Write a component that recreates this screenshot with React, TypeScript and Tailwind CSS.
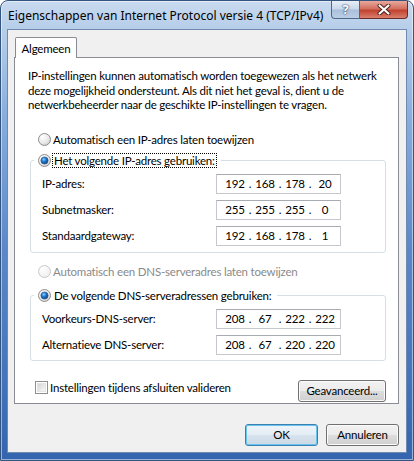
import { Fragment } from "react";

const ipRows = [
  { label: "IP-adres:", value: ["192", "168", "178", "20"] },
  { label: "Subnetmasker:", value: ["255", "255", "255", "0"] },
  { label: "Standaardgateway:", value: ["192", "168", "178", "1"] },
];

const dnsRows = [
  { label: "Voorkeurs-DNS-server:", value: ["208", "67", "222", "222"] },
  { label: "Alternatieve DNS-server:", value: ["208", "67", "220", "220"] },
];

function Radio({ checked = false, disabled = false }: { checked?: boolean; disabled?: boolean }) {
  return (
    <svg width="13" height="13" viewBox="0 0 13 13" className="shrink-0">
      <defs>
        <radialGradient id="radio-face" cx="0.35" cy="0.3" r="0.8">
          <stop offset="0" stopColor="#ffffff" />
          <stop offset="0.6" stopColor="#e9e9e9" />
          <stop offset="1" stopColor="#c9c9c9" />
        </radialGradient>
        <radialGradient id="radio-face-off" cx="0.35" cy="0.3" r="0.8">
          <stop offset="0" stopColor="#ffffff" />
          <stop offset="1" stopColor="#ececec" />
        </radialGradient>
        <radialGradient id="radio-dot" cx="0.4" cy="0.35" r="0.7">
          <stop offset="0" stopColor="#8fd0fb" />
          <stop offset="0.45" stopColor="#1d78d3" />
          <stop offset="1" stopColor="#17406f" />
        </radialGradient>
      </defs>
      <circle
        cx="6.5"
        cy="6.5"
        r="6"
        fill={disabled ? "url(#radio-face-off)" : "url(#radio-face)"}
        stroke={disabled ? "#c9c9c9" : "#8c8e90"}
      />
      {checked && <circle cx="6.5" cy="6.5" r="3.6" fill="url(#radio-dot)" stroke="#2a4d78" strokeWidth="0.6" />}
    </svg>
  );
}

function Checkbox() {
  return (
    <span className="box-border flex h-[13px] w-[13px] shrink-0 items-center justify-center border border-[#8e8f8f] bg-white">
      <span className="h-[9px] w-[9px] border border-[#e4e4e4] bg-[linear-gradient(135deg,#d6d6d6,#f7f7f7)]" />
    </span>
  );
}

function IpField({ value }: { value: string[] }) {
  return (
    <div className="flex h-[20px] w-[125px] items-center border border-[#c6c8cd] border-t-[#a9abb2] bg-white pl-[8px] leading-[18px]">
      {value.map((part, i) => (
        <Fragment key={i}>
          {i > 0 && <span className="w-[10px] text-center">.</span>}
          <span className="w-[20px] text-center">{part}</span>
        </Fragment>
      ))}
    </div>
  );
}

function FieldRows({ rows }: { rows: typeof ipRows }) {
  return (
    <div className="mt-[6px] flex flex-col gap-[6px] pl-[11px]">
      {rows.map((row) => (
        <div key={row.label} className="flex items-center">
          <span className="w-[174px]">{row.label}</span>
          <IpField value={row.value} />
        </div>
      ))}
    </div>
  );
}

function Button({ label, primary = false, className = "" }: { label: string; primary?: boolean; className?: string }) {
  return (
    <button
      type="button"
      className={`h-[22px] rounded-[3px] border leading-[18px] text-black ${
        primary
          ? "border-[#3c7fb1] bg-[linear-gradient(#eef5fa_0%,#e4edf4_50%,#d6e2ec_51%,#ccdae6_100%)] shadow-[inset_0_0_0_1px_#68c4ec]"
          : "border-[#707070] bg-[linear-gradient(#f2f2f2_0%,#ebebeb_50%,#dddddd_51%,#cfcfcf_100%)] shadow-[inset_0_0_0_1px_#fbfbfb]"
      } ${className}`}
    >
      {label}
    </button>
  );
}

export default function App() {
  return (
    <div className="h-[461px] w-[414px] bg-white font-['Lato',sans-serif] text-[11.5px] tracking-[-0.2px] text-black">
      <div className="box-border flex h-[461px] w-[414px] flex-col rounded-t-[8px] border border-[#34557f] bg-[linear-gradient(180deg,#c8daef_0px,#b7cee9_28px,#86acdc_120px,#5a87c8_250px,#4373ba_380px,#3464ad_461px)] shadow-[inset_0_0_0_1px_rgba(255,255,255,0.5)]">
        {/* title bar */}
        <div className="flex h-[28px] shrink-0 items-start justify-between pl-[7px] pr-[5px]">
          <span className="mt-[7px] whitespace-nowrap font-['Noto_Sans',sans-serif] text-[12px] leading-[15px] tracking-normal">
            Eigenschappen van Internet Protocol versie 4 (TCP/IPv4)
          </span>
          <div className="flex">
            <div className="flex h-[18px] w-[29px] items-center justify-center rounded-bl-[4px] border border-t-0 border-[#4d6789] bg-[linear-gradient(#e8eff8_0%,#c9d8eb_45%,#a9bfdb_55%,#bccfe6_100%)] font-['Noto_Sans',sans-serif] text-[13px] font-bold leading-none text-white [text-shadow:0_0_2px_#2b3f5c,0_0_1px_#2b3f5c]">
              ?
            </div>
            <div className="flex h-[18px] w-[48px] items-center justify-center rounded-br-[4px] border border-l-0 border-t-0 border-[#6b2b26] bg-[linear-gradient(#e9a99c_0%,#d27061_45%,#c2422f_55%,#d9806f_100%)]">
              <svg width="14" height="11" viewBox="0 0 14 11">
                <path d="M2.5 1.5 L11.5 9.5 M11.5 1.5 L2.5 9.5" stroke="#4a1d18" strokeWidth="4" strokeLinecap="round" />
                <path d="M2.5 1.5 L11.5 9.5 M11.5 1.5 L2.5 9.5" stroke="#ffffff" strokeWidth="2.2" strokeLinecap="round" />
              </svg>
            </div>
          </div>
        </div>

        {/* client area */}
        <div className="ml-[6px] box-border flex h-[424px] w-[400px] shrink-0 flex-col border border-[#6f89b0] bg-[#f0f0f0]">
          <div className="ml-[6px] mt-[7px] flex flex-col">
            <div className="relative z-10 -mb-px ml-px flex h-[21px] w-[62px] items-center justify-center rounded-t-[2px] border border-b-0 border-[#898c95] bg-white leading-[15px]">
              Algemeen
            </div>
            <div className="box-border h-[347px] w-[385px] border border-[#898c95] bg-white">
              <div className="ml-[13px] mt-[11px] whitespace-nowrap leading-[14.5px]">
                <div>IP-instellingen kunnen automatisch worden toegewezen als het netwerk</div>
                <div>deze mogelijkheid ondersteunt. Als dit niet het geval is, dient u de</div>
                <div>netwerkbeheerder naar de geschikte IP-instellingen te vragen.</div>
              </div>

              <div className="ml-[23px] mt-[19px] flex h-[15px] items-center gap-[2px] leading-[15px]">
                <Radio />
                <span>Automatisch een IP-adres laten toewijzen</span>
              </div>

              <fieldset className="ml-[15px] mt-[6px] w-[356px] rounded-[3px] border border-[#d5dfe5] pb-[6px]">
                <legend className="ml-[3px] px-[4px]">
                  <span className="flex h-[15px] items-center gap-px leading-[13px]">
                    <Radio checked />
                    <span className="border border-dotted border-black px-px">Het volgende IP-adres gebruiken:</span>
                  </span>
                </legend>
                <FieldRows rows={ipRows} />
              </fieldset>

              <div className="ml-[23px] mt-[11px] flex h-[15px] items-center gap-[2px] leading-[15px] text-[#8a8a8a]">
                <Radio disabled />
                <span>Automatisch een DNS-serveradres laten toewijzen</span>
              </div>

              <fieldset className="ml-[15px] mt-[9px] w-[356px] rounded-[3px] border border-[#d5dfe5] pb-[5px]">
                <legend className="ml-[3px] px-[4px]">
                  <span className="flex h-[15px] items-center gap-px leading-[13px]">
                    <Radio checked />
                    <span className="border border-transparent px-px">De volgende DNS-serveradressen gebruiken:</span>
                  </span>
                </legend>
                <FieldRows rows={dnsRows} />
              </fieldset>

              <div className="mr-[12px] mt-[19px] flex items-start justify-between">
                <div className="ml-[20px] flex h-[15px] items-center gap-[2px] leading-[15px]">
                  <Checkbox />
                  <span>Instellingen tijdens afsluiten valideren</span>
                </div>
                <Button label="Geavanceerd..." className="w-[88px]" />
              </div>
            </div>
          </div>

          <div className="mr-[7px] mt-[20px] flex justify-end gap-[8px]">
            <Button label="OK" primary className="w-[73px]" />
            <Button label="Annuleren" className="w-[73px]" />
          </div>
        </div>
      </div>
    </div>
  );
}
